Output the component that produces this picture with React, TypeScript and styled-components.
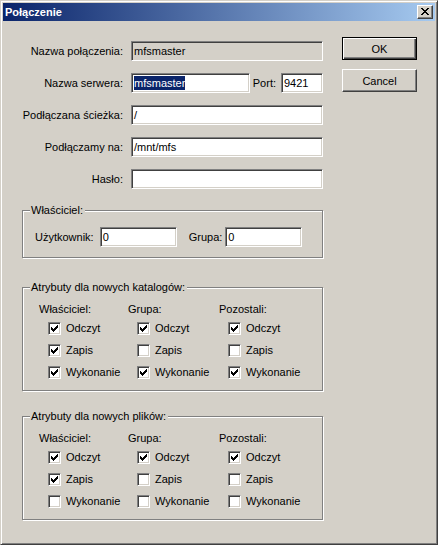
import React from 'react';
import styled, { createGlobalStyle } from 'styled-components';

const GlobalStyle = createGlobalStyle`
  html, body {
    margin: 0;
    padding: 0;
    background: #d4d0c8;
  }
  body {
    font-family: "Liberation Sans", Arial, sans-serif;
    font-size: 11px;
    color: #000;
  }
  * {
    box-sizing: border-box;
  }
`;

const Window = styled.div`
  width: 438px;
  height: 545px;
  background: #d4d0c8;
  border: 1px solid;
  border-color: #d4d0c8 #404040 #404040 #d4d0c8;
  box-shadow: inset 1px 1px #fff, inset -1px -1px #808080;
  padding: 2px;
  display: flex;
  flex-direction: column;
`;

const TitleBar = styled.div`
  height: 18px;
  flex: none;
  background: linear-gradient(to right, #0a246a, #a6caf0);
  display: flex;
  align-items: center;
  justify-content: space-between;
  padding: 0 2px;
`;

const Title = styled.span`
  color: #fff;
  font-weight: bold;
  font-size: 11px;
  line-height: 18px;
`;

const CloseButton = styled.div`
  width: 16px;
  height: 14px;
  background: #d4d0c8;
  border: 1px solid;
  border-color: #fff #404040 #404040 #fff;
  box-shadow: inset -1px -1px #808080;
  display: flex;
  align-items: center;
  justify-content: center;
  padding: 0 1px 1px 0;
`;

const Body = styled.div`
  display: flex;
  gap: 19px;
  padding: 16px 0 0 19px;
`;

const FormColumn = styled.div`
  width: 301px;
  display: flex;
  flex-direction: column;
`;

const FieldGrid = styled.div`
  margin-top: 4px;
  display: grid;
  grid-template-columns: 101px 192px;
  column-gap: 8px;
  row-gap: 12px;
  align-items: center;
`;

const Label = styled.label`
  text-align: right;
  white-space: nowrap;
`;

const Edit = styled.div<{ $disabled?: boolean; $width?: number }>`
  height: 20px;
  width: ${p => (p.$width ? `${p.$width}px` : 'auto')};
  flex: ${p => (p.$width ? 'none' : '1')};
  background: ${p => (p.$disabled ? '#d4d0c8' : '#fff')};
  border: 1px solid;
  border-color: #808080 #fff #fff #808080;
  box-shadow: inset 1px 1px #404040, inset -1px -1px #d4d0c8;
  padding: 0 2px;
  display: flex;
  align-items: center;
  white-space: nowrap;
  overflow: hidden;
`;

const Selected = styled.span`
  background: #0a246a;
  color: #fff;
  line-height: 14px;
`;

const ServerRow = styled.div`
  display: flex;
  align-items: center;
`;

const PortLabel = styled.span`
  margin: 0 5px 0 3px;
`;

const Group = styled.div<{ $top: number }>`
  position: relative;
  margin-top: ${p => p.$top}px;
  border: 1px solid #808080;
  box-shadow: inset 1px 1px #fff, 1px 1px #fff;
`;

const Legend = styled.span`
  position: absolute;
  top: -7px;
  left: 7px;
  padding: 0 2px 0 1px;
  background: #d4d0c8;
  line-height: 13px;
`;

const OwnerRow = styled.div`
  display: flex;
  align-items: center;
  padding: 16px 0 10px 12px;
`;

const OwnerLabel = styled.span<{ $before: number; $after: number }>`
  margin-left: ${p => p.$before}px;
  margin-right: ${p => p.$after}px;
`;

const AttrGrid = styled.div`
  display: grid;
  grid-template-columns: 89px 91px 90px;
  padding: 15px 0 10px 16px;
`;

const AttrColumn = styled.div`
  display: flex;
  flex-direction: column;
  gap: 6px;
`;

const ColumnHeader = styled.div`
  line-height: 13px;
  margin-bottom: -2px;
`;

const CheckRow = styled.div`
  display: flex;
  align-items: center;
  height: 16px;
  padding-left: 9px;
  gap: 5px;
`;

const CheckBox = styled.span`
  width: 13px;
  height: 13px;
  flex: none;
  background: #fff;
  border: 1px solid;
  border-color: #808080 #fff #fff #808080;
  box-shadow: inset 1px 1px #404040, inset -1px -1px #d4d0c8;
  padding: 2px;
  display: flex;
`;

const ButtonColumn = styled.div`
  display: flex;
  flex-direction: column;
  gap: 9px;
`;

const Button = styled.div<{ $default?: boolean }>`
  width: 75px;
  height: 23px;
  display: flex;
  align-items: center;
  justify-content: center;
  background: #d4d0c8;
  border: 1px solid;
  border-color: ${p => (p.$default ? '#000' : '#fff #404040 #404040 #fff')};
  box-shadow: ${p =>
    p.$default
      ? 'inset 1px 1px #fff, inset -1px -1px #404040, inset -2px -2px #808080'
      : 'inset -1px -1px #808080'};
`;

const CheckMark = () => (
  <svg width="7" height="7" viewBox="0 0 7 7" shapeRendering="crispEdges">
    {[2, 3, 4, 3, 2, 1, 0].map((y, x) => (
      <rect key={x} x={x} y={y} width="1" height="3" fill="#000" />
    ))}
  </svg>
);

const CloseGlyph = () => (
  <svg width="8" height="7" viewBox="0 0 8 7" shapeRendering="crispEdges">
    <rect x="0" y="0" width="2" height="1" />
    <rect x="6" y="0" width="2" height="1" />
    <rect x="1" y="1" width="2" height="1" />
    <rect x="5" y="1" width="2" height="1" />
    <rect x="2" y="2" width="4" height="1" />
    <rect x="3" y="3" width="2" height="1" />
    <rect x="2" y="4" width="4" height="1" />
    <rect x="1" y="5" width="2" height="1" />
    <rect x="5" y="5" width="2" height="1" />
    <rect x="0" y="6" width="2" height="1" />
    <rect x="6" y="6" width="2" height="1" />
  </svg>
);

type Perm = [boolean, boolean, boolean];

const whoLabels = ['Właściciel:', 'Grupa:', 'Pozostali:'];
const permLabels = ['Odczyt', 'Zapis', 'Wykonanie'];

const dirPerms: Perm[] = [
  [true, true, true],
  [true, false, true],
  [true, false, true],
];

const filePerms: Perm[] = [
  [true, true, false],
  [true, false, false],
  [true, false, false],
];

function AttrGroup({ title, perms, top }: { title: string; perms: Perm[]; top: number }) {
  return (
    <Group $top={top}>
      <Legend>{title}</Legend>
      <AttrGrid>
        {perms.map((col, i) => (
          <AttrColumn key={i}>
            <ColumnHeader>{whoLabels[i]}</ColumnHeader>
            {col.map((on, j) => (
              <CheckRow key={j}>
                <CheckBox>{on && <CheckMark />}</CheckBox>
                <span>{permLabels[j]}</span>
              </CheckRow>
            ))}
          </AttrColumn>
        ))}
      </AttrGrid>
    </Group>
  );
}

export default function App() {
  return (
    <>
      <GlobalStyle />
      <Window>
        <TitleBar>
          <Title>Połączenie</Title>
          <CloseButton>
            <CloseGlyph />
          </CloseButton>
        </TitleBar>
        <Body>
          <FormColumn>
            <FieldGrid>
              <Label>Nazwa połączenia:</Label>
              <Edit $disabled>mfsmaster</Edit>

              <Label>Nazwa serwera:</Label>
              <ServerRow>
                <Edit>
                  <Selected>mfsmaster</Selected>
                </Edit>
                <PortLabel>Port:</PortLabel>
                <Edit $width={42}>9421</Edit>
              </ServerRow>

              <Label>Podłączana ścieżka:</Label>
              <Edit>/</Edit>

              <Label>Podłączamy na:</Label>
              <Edit>/mnt/mfs</Edit>

              <Label>Hasło:</Label>
              <Edit />
            </FieldGrid>

            <Group $top={21}>
              <Legend>Właściciel:</Legend>
              <OwnerRow>
                <OwnerLabel $before={0} $after={6}>Użytkownik:</OwnerLabel>
                <Edit $width={77}>0</Edit>
                <OwnerLabel $before={12} $after={3}>Grupa:</OwnerLabel>
                <Edit $width={77}>0</Edit>
              </OwnerRow>
            </Group>

            <AttrGroup title="Atrybuty dla nowych katalogów:" perms={dirPerms} top={29} />
            <AttrGroup title="Atrybuty dla nowych plików:" perms={filePerms} top={25} />
          </FormColumn>

          <ButtonColumn>
            <Button $default>OK</Button>
            <Button>Cancel</Button>
          </ButtonColumn>
        </Body>
      </Window>
    </>
  );
}
